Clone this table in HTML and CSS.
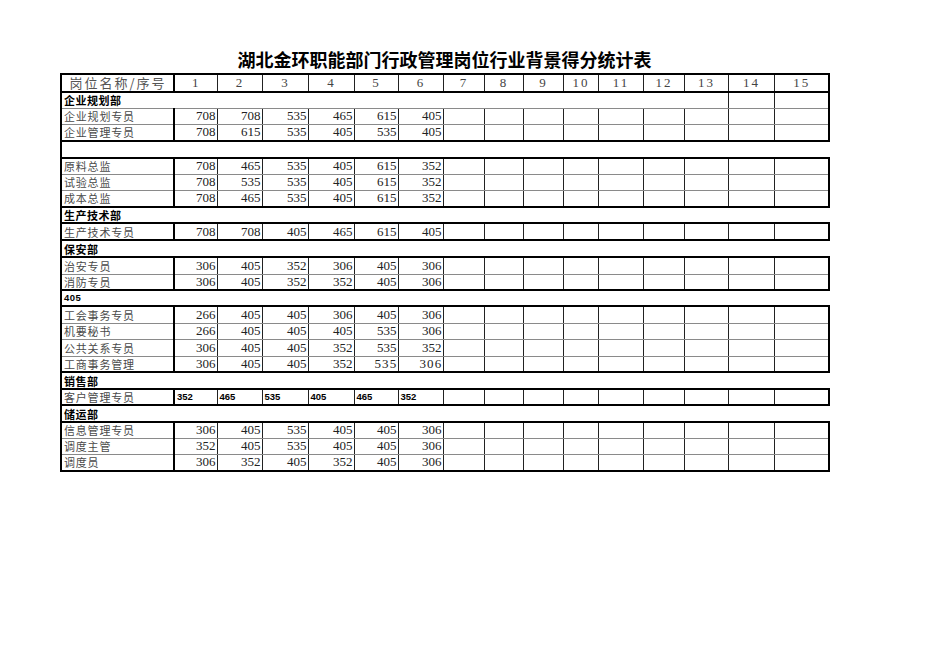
FILE: index.html
```html
<!DOCTYPE html>
<html>
<head>
<meta charset="utf-8">
<link rel="stylesheet" href="styles.css">
</head>
<body>
<div class="page">
  <div class="title">湖北金环职能部门行政管理岗位行业背景得分统计表</div>
  <table class="sheet">
    <colgroup>
      <col class="c0"><col class="c1"><col class="c2"><col class="c3"><col class="c4"><col class="c5"><col class="c6"><col class="c7"><col class="c8"><col class="c9"><col class="c10"><col class="c11"><col class="c12"><col class="c13"><col class="c14"><col class="c15">
    </colgroup>
    <tr class="hdr">
      <td class="lab hlab">岗位名称/序号</td><td class="h">1</td><td class="h">2</td><td class="h">3</td><td class="h">4</td><td class="h">5</td><td class="h">6</td><td class="h">7</td><td class="h">8</td><td class="h">9</td><td class="h">10</td><td class="h">11</td><td class="h">12</td><td class="h">13</td><td class="h">14</td><td class="h end">15</td>
    </tr>
    <tr class="secin h16">
      <td class="seclab" colspan="14">企业规划部</td><td class="e"></td><td class="e end"></td>
    </tr>
    <tr class="h16">
      <td class="lab">企业规划专员</td><td class="n">708</td><td class="n">708</td><td class="n">535</td><td class="n">465</td><td class="n">615</td><td class="n">405</td><td class="e"></td><td class="e"></td><td class="e"></td><td class="e"></td><td class="e"></td><td class="e"></td><td class="e"></td><td class="e"></td><td class="e end"></td>
    </tr>
    <tr class="last h17">
      <td class="lab">企业管理专员</td><td class="n">708</td><td class="n">615</td><td class="n">535</td><td class="n">405</td><td class="n">535</td><td class="n">405</td><td class="e"></td><td class="e"></td><td class="e"></td><td class="e"></td><td class="e"></td><td class="e"></td><td class="e"></td><td class="e"></td><td class="e end"></td>
    </tr>
    <tr class="sec h17"><td colspan="16"></td></tr>
    <tr class="first h16">
      <td class="lab">原料总监</td><td class="n">708</td><td class="n">465</td><td class="n">535</td><td class="n">405</td><td class="n">615</td><td class="n">352</td><td class="e"></td><td class="e"></td><td class="e"></td><td class="e"></td><td class="e"></td><td class="e"></td><td class="e"></td><td class="e"></td><td class="e end"></td>
    </tr>
    <tr class="h16">
      <td class="lab">试验总监</td><td class="n">708</td><td class="n">535</td><td class="n">535</td><td class="n">405</td><td class="n">615</td><td class="n">352</td><td class="e"></td><td class="e"></td><td class="e"></td><td class="e"></td><td class="e"></td><td class="e"></td><td class="e"></td><td class="e"></td><td class="e end"></td>
    </tr>
    <tr class="last h17">
      <td class="lab">成本总监</td><td class="n">708</td><td class="n">465</td><td class="n">535</td><td class="n">405</td><td class="n">615</td><td class="n">352</td><td class="e"></td><td class="e"></td><td class="e"></td><td class="e"></td><td class="e"></td><td class="e"></td><td class="e"></td><td class="e"></td><td class="e end"></td>
    </tr>
    <tr class="sec h16"><td class="seclab" colspan="16">生产技术部</td></tr>
    <tr class="first last h17">
      <td class="lab">生产技术专员</td><td class="n">708</td><td class="n">708</td><td class="n">405</td><td class="n">465</td><td class="n">615</td><td class="n">405</td><td class="e"></td><td class="e"></td><td class="e"></td><td class="e"></td><td class="e"></td><td class="e"></td><td class="e"></td><td class="e"></td><td class="e end"></td>
    </tr>
    <tr class="sec h17"><td class="seclab" colspan="16">保安部</td></tr>
    <tr class="first h17">
      <td class="lab">治安专员</td><td class="n">306</td><td class="n">405</td><td class="n">352</td><td class="n">306</td><td class="n">405</td><td class="n">306</td><td class="e"></td><td class="e"></td><td class="e"></td><td class="e"></td><td class="e"></td><td class="e"></td><td class="e"></td><td class="e"></td><td class="e end"></td>
    </tr>
    <tr class="last h16">
      <td class="lab">消防专员</td><td class="n">306</td><td class="n">405</td><td class="n">352</td><td class="n">352</td><td class="n">405</td><td class="n">306</td><td class="e"></td><td class="e"></td><td class="e"></td><td class="e"></td><td class="e"></td><td class="e"></td><td class="e"></td><td class="e"></td><td class="e end"></td>
    </tr>
    <tr class="sec h16"><td class="seclab num" colspan="16">405</td></tr>
    <tr class="first h17">
      <td class="lab">工会事务专员</td><td class="n">266</td><td class="n">405</td><td class="n">405</td><td class="n">306</td><td class="n">405</td><td class="n">306</td><td class="e"></td><td class="e"></td><td class="e"></td><td class="e"></td><td class="e"></td><td class="e"></td><td class="e"></td><td class="e"></td><td class="e end"></td>
    </tr>
    <tr class="h16">
      <td class="lab">机要秘书</td><td class="n">266</td><td class="n">405</td><td class="n">405</td><td class="n">405</td><td class="n">535</td><td class="n">306</td><td class="e"></td><td class="e"></td><td class="e"></td><td class="e"></td><td class="e"></td><td class="e"></td><td class="e"></td><td class="e"></td><td class="e end"></td>
    </tr>
    <tr class="h17">
      <td class="lab">公共关系专员</td><td class="n">306</td><td class="n">405</td><td class="n">405</td><td class="n">352</td><td class="n">535</td><td class="n">352</td><td class="e"></td><td class="e"></td><td class="e"></td><td class="e"></td><td class="e"></td><td class="e"></td><td class="e"></td><td class="e"></td><td class="e end"></td>
    </tr>
    <tr class="last h16">
      <td class="lab">工商事务管理</td><td class="n">306</td><td class="n">405</td><td class="n">405</td><td class="n">352</td><td class="n sp">535</td><td class="n sp">306</td><td class="e"></td><td class="e"></td><td class="e"></td><td class="e"></td><td class="e"></td><td class="e"></td><td class="e"></td><td class="e"></td><td class="e end"></td>
    </tr>
    <tr class="sec h17"><td class="seclab" colspan="16">销售部</td></tr>
    <tr class="first last h16">
      <td class="lab">客户管理专员</td><td class="b">352</td><td class="b">465</td><td class="b">535</td><td class="b">405</td><td class="b">465</td><td class="b">352</td><td class="e"></td><td class="e"></td><td class="e"></td><td class="e"></td><td class="e"></td><td class="e"></td><td class="e"></td><td class="e"></td><td class="e end"></td>
    </tr>
    <tr class="sec h17"><td class="seclab" colspan="16">储运部</td></tr>
    <tr class="first h16">
      <td class="lab">信息管理专员</td><td class="n">306</td><td class="n">405</td><td class="n">535</td><td class="n">405</td><td class="n">405</td><td class="n">306</td><td class="e"></td><td class="e"></td><td class="e"></td><td class="e"></td><td class="e"></td><td class="e"></td><td class="e"></td><td class="e"></td><td class="e end"></td>
    </tr>
    <tr class="h16">
      <td class="lab">调度主管</td><td class="n">352</td><td class="n">405</td><td class="n">535</td><td class="n">405</td><td class="n">405</td><td class="n">306</td><td class="e"></td><td class="e"></td><td class="e"></td><td class="e"></td><td class="e"></td><td class="e"></td><td class="e"></td><td class="e"></td><td class="e end"></td>
    </tr>
    <tr class="last h17">
      <td class="lab">调度员</td><td class="n">306</td><td class="n">352</td><td class="n">405</td><td class="n">352</td><td class="n">405</td><td class="n">306</td><td class="e"></td><td class="e"></td><td class="e"></td><td class="e"></td><td class="e"></td><td class="e"></td><td class="e"></td><td class="e"></td><td class="e end"></td>
    </tr>
  </table>
</div>
</body>
</html>
```
FILE: styles.css
```css
html, body {
  margin: 0;
  padding: 0;
  background: #fff;
}
.page {
  padding: 49px 0 0 60px;
  width: 770px;
}
.title {
  width: 769px;
  height: 20px;
  line-height: 20px;
  margin-bottom: 4px;
  text-align: center;
  font-family: "Noto Sans CJK SC", sans-serif;
  font-weight: 700;
  font-size: 18px;
  color: #000;
  letter-spacing: 0;
}
.sheet {
  border-collapse: collapse;
  table-layout: fixed;
  width: 768px;
  font-family: "Liberation Serif", "Noto Sans CJK SC", serif;
}
.c0 { width: 113px; }
.c1 { width: 43px; }
.c2 { width: 45px; }
.c3 { width: 46px; }
.c4 { width: 46px; }
.c5 { width: 44px; }
.c6 { width: 45px; }
.c7 { width: 41px; }
.c8 { width: 39px; }
.c9 { width: 40px; }
.c10 { width: 35px; }
.c11 { width: 45px; }
.c12 { width: 41px; }
.c13 { width: 44px; }
.c14 { width: 46px; }
.c15 { width: 55px; }

.sheet td {
  padding: 0 1px 0 2px;
  line-height: 12px;
  vertical-align: middle;
  overflow: hidden;
  white-space: nowrap;
  border-bottom: 1px solid #8a8a8a;
}
.h16 { height: 16px; }
.h17 { height: 17px; }
.hdr { height: 18px; }
.hdr td {
  border-top: 2px solid #000;
  border-bottom: 2px solid #000;
}
.first td { border-top: 2px solid #000; }
.last td { border-bottom: 2px solid #000; }

.lab {
  border-left: 2px solid #000;
  border-right: 2px solid #000;
  font-family: "Noto Sans CJK SC", sans-serif;
  font-size: 11px;
  letter-spacing: 0.8px;
  color: #4a4a4a;
}
.hlab {
  text-align: center;
  font-size: 13px;
  letter-spacing: 2px;
  line-height: 14px;
  color: #555;
}
.h {
  text-align: center;
  font-size: 13px;
  letter-spacing: 2px;
  color: #444;
  border-right: 1px solid #222;
  padding: 0;
}
.n {
  text-align: right;
  font-size: 13px;
  color: #222;
  border-right: 1px solid #222;
}
.n.sp { letter-spacing: 1.2px; padding-right: 0; }
.b {
  text-align: left;
  font-family: "Liberation Sans", sans-serif;
  font-weight: 700;
  font-size: 9.5px;
  color: #000;
  border-right: 1px solid #222;
}
.e { border-right: 1px solid #222; }
.end { border-right: 2px solid #000; }

.sec td {
  border-left: 2px solid #000;
  border-bottom: none;
}
.seclab {
  border-left: 2px solid #000;
  font-family: "Noto Sans CJK SC", sans-serif;
  font-weight: 700;
  font-size: 11px;
  letter-spacing: 0.5px;
  color: #000;
}
.seclab.num {
  font-family: "Liberation Sans", sans-serif;
  font-size: 9.5px;
}
.secin .e { border-left: 1px solid #222; }
```
